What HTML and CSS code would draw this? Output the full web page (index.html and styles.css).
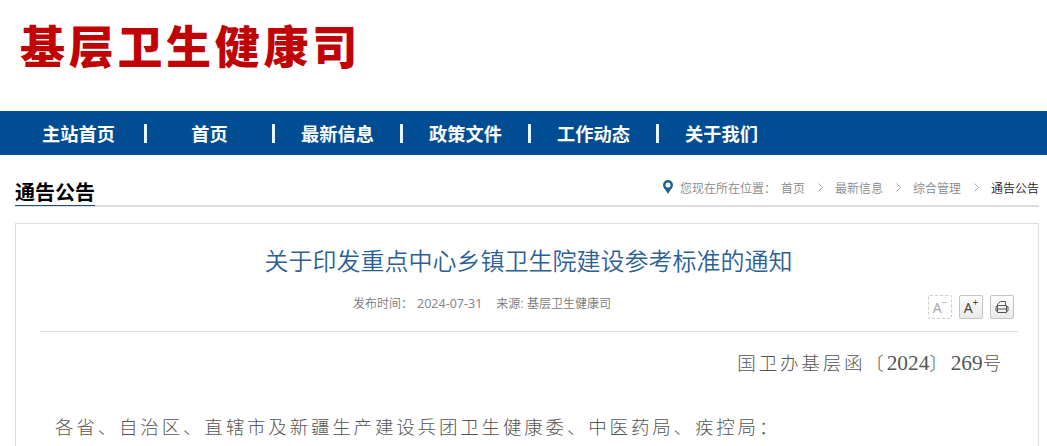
FILE: index.html
```html
<!DOCTYPE html>
<html lang="zh-CN">
<head>
  <meta charset="UTF-8" />
  <meta name="viewport" content="width=device-width, initial-scale=1.0"/>
  <title>关于印发重点中心乡镇卫生院建设参考标准的通知</title>
  <link rel="stylesheet" href="styles.css">
</head>
<body>
  <header class="header">
    <h1 class="logo">基层卫生健康司</h1>
  </header>

  <nav class="nav">
    <a href="#">主站首页</a>
    <a href="#">首页</a>
    <a href="#">最新信息</a>
    <a href="#">政策文件</a>
    <a href="#">工作动态</a>
    <a href="#">关于我们</a>
  </nav>

  <div class="title-bar">
    <h2>通告公告</h2>
    <div class="position">
      <svg class="pin" width="10" height="14" viewBox="0 0 10 14"><path fill="#1d628f" fill-rule="evenodd" d="M5 0a5 5 0 0 0-5 5c0 3 3.200 5.400 5 9 1.800-3.600 5-6 5-9a5 5 0 0 0-5-5zm0 2.400a2.500 2.500 0 1 1 0 5 2.500 2.500 0 0 1 0-5z"/></svg>
      <span class="label">您现在所在位置：</span>
      <a href="#">首页</a>
      <svg class="arrow" width="5" height="9" viewBox="0 0 5 9"><path d="M.5.5 4.500 4.500.5 8.500"/></svg>
      <a href="#">最新信息</a>
      <svg class="arrow" width="5" height="9" viewBox="0 0 5 9"><path d="M.5.5 4.500 4.500.5 8.500"/></svg>
      <a href="#">综合管理</a>
      <svg class="arrow" width="5" height="9" viewBox="0 0 5 9"><path d="M.5.5 4.500 4.500.5 8.500"/></svg>
      <a href="#" class="current">通告公告</a>
    </div>
  </div>

  <div class="article">
    <div class="article-title">关于印发重点中心乡镇卫生院建设参考标准的通知</div>
    <div class="source">
      <div class="info">
        <span>发布时间：</span>
        <span class="date">2024-07-31</span>
        <span>来源: 基层卫生健康司</span>
      </div>
      <div class="tools">
        <button class="disabled" title="缩小"><span>A</span><sup>−</sup></button>
        <button title="放大"><span>A</span><sup>+</sup></button>
        <button title="打印">
          <svg width="14" height="14" viewBox="0 0 14 14"><path d="M2.500 5.500V4L5.500 1.500h5v4M2.500 5.500h9v7h-9zM2.500 9h9M2.500 6.500h-1.500v4.500h1.500M11.500 6.500h1.500v4.500h-1.500"/></svg>
        </button>
      </div>
    </div>
    <div class="content">
      <p class="doc-number">国卫办基层函〔<span class="num">2024</span>〕<span class="num">269</span>号</p>
      <p>各省、自治区、直辖市及新疆生产建设兵团卫生健康委、中医药局、疾控局：</p>
    </div>
  </div>
</body>
</html>
```
FILE: styles.css
```css
* { box-sizing: border-box; margin: 0; padding: 0; }
body {
  background: #fff;
  color: #333;
  font-family: "Liberation Sans", "Noto Sans CJK SC", sans-serif;
  height: 446px;
  overflow: hidden;
  display: flex;
  flex-direction: column;
}
a { color: inherit; text-decoration: none; }
.header {
  height: 111px;
  padding: 17px 0 0 20px;
  flex: none;
}
.logo {
  font-size: 45px;
  line-height: 64px;
  letter-spacing: 3.7px;
  font-weight: 900;
  color: #c00405;
}
.nav {
  display: flex;
  flex: none;
  height: 44px;
  padding-left: 13px;
  background: #004d93;
}
.nav a {
  display: flex;
  align-items: center;
  justify-content: center;
  width: 128px;
  color: #fff;
  font-size: 18.2px;
  font-weight: bold;
}
.nav a:first-child { width: 131px; }
.nav a + a::before {
  content: "";
  width: 3px;
  height: 19px;
  margin-right: auto;
  background: #e6f5fc;
}
.nav a + a::after {
  content: "";
  margin-left: auto;
}
.title-bar {
  display: flex;
  justify-content: space-between;
  flex: none;
  height: 52px;
  margin: 0 8px 0 15px;
  border-bottom: 2px solid #ddd;
}
.title-bar h2 {
  height: 51px;
  padding-top: 23px;
  font-size: 20px;
  line-height: 30px;
  color: #000;
  border-bottom: 1px solid #1b4f7e;
}
.position {
  display: flex;
  align-items: center;
  height: 30px;
  margin-top: 17px;
  font-size: 12px;
  font-weight: 350;
  color: #888;
}
.pin { margin: 0 7px 1px 0; }
.label { margin-right: 5px; }
.arrow {
  margin: 0 12px 0 13px;
  fill: none;
  stroke: #aaa;
}
.current { color: #222; }
.article {
  flex: none;
  height: 240px;
  margin: 16px 8px 0 15px;
  padding: 0 20px 0 24px;
  border: 1px solid #ddd;
}
.article-title {
  padding-top: 18px;
  margin: 0 -1px 0 -2px;
  font-size: 24px;
  font-weight: 350;
  line-height: 39px;
  text-align: center;
  color: #2b5f96;
}
.source {
  display: flex;
  justify-content: flex-end;
  height: 51px;
  border-bottom: 1px solid #ddd;
}
.info {
  display: flex;
  padding-top: 13px;
  margin-right: 317px;
  font-size: 12px;
  font-weight: 350;
  line-height: 20px;
  color: #777;
}
.date {
  margin: 0 14px 0 4px;
  font-family: "Noto Sans", sans-serif;
  font-size: 12.5px;
  font-weight: 400;
  color: #888;
}
.tools {
  display: flex;
  gap: 7px;
  padding: 14px 4px 0 0;
}
.tools button {
  display: flex;
  align-items: center;
  justify-content: center;
  width: 24px;
  height: 24px;
  border: 1px solid #c4c4c4;
  border-radius: 2px;
  background: linear-gradient(#fff, #eaeaea);
  color: #444;
  font-family: "Noto Sans", sans-serif;
  font-size: 14px;
}
.tools .disabled {
  border: 1px dashed #ccc;
  background: #fff;
  color: #aaa;
}
.tools sup {
  font-size: 10px;
  line-height: 9px;
  margin-top: -9px;
}
.tools svg {
  flex: none;
  fill: none;
  stroke: #555;
}
.content {
  padding: 15px 14px 0 15px;
  font-family: "Liberation Serif", "Noto Sans CJK SC", serif;
  font-size: 18.5px;
  font-weight: 300;
  line-height: 32px;
  letter-spacing: 2.83px;
  color: #555;
}
.content p {
  margin-bottom: 32px;
  white-space: nowrap;
}
.content .doc-number { text-align: right; }
.num {
  font-size: 21.33px;
  letter-spacing: 0;
}
```
